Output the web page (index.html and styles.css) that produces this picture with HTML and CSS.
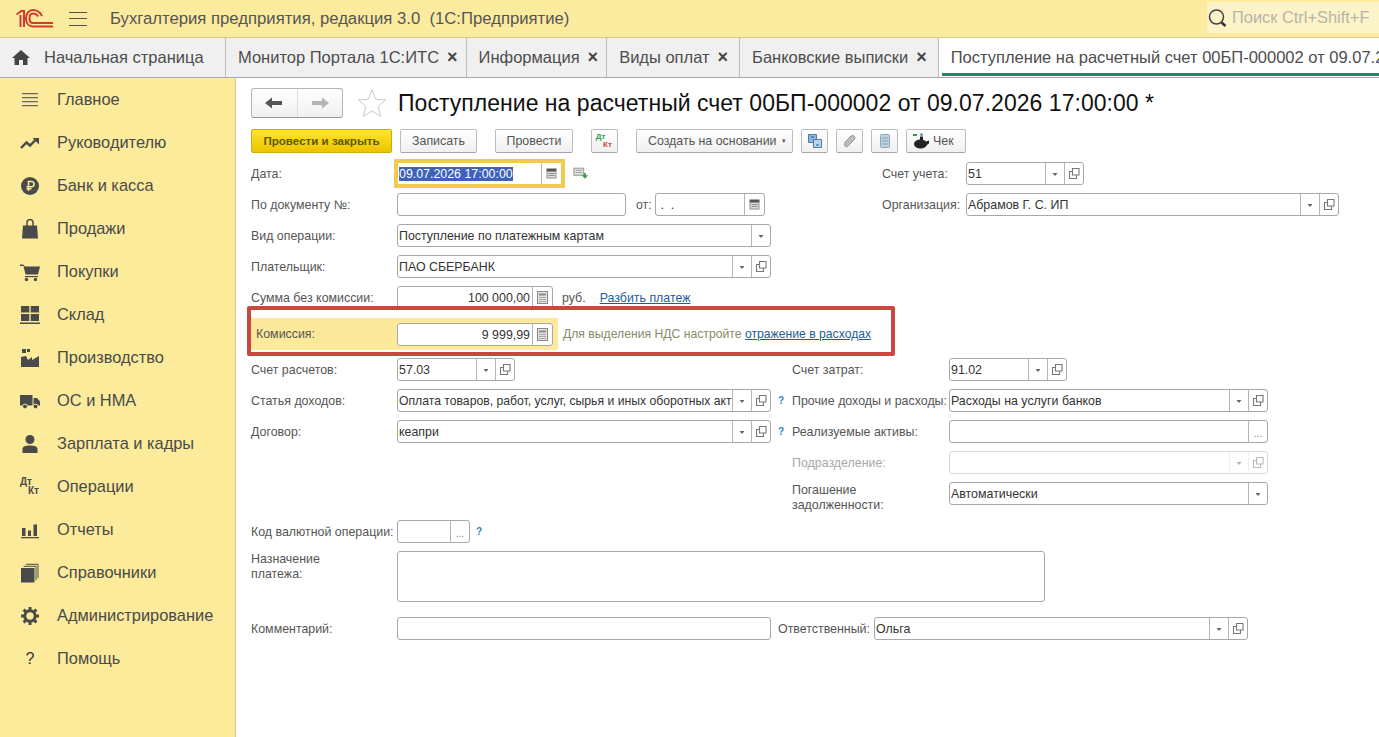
FILE: index.html
```html
<!DOCTYPE html>
<html lang="ru">
<head>
  <meta charset="UTF-8">
  <link rel="stylesheet" href="styles.css">
  <title>Поступление на расчетный счет</title>
</head>
<body>
  <svg class="sprites" width="0" height="0">
    <symbol id="i-select" viewBox="0 0 18 21"><path d="M6.500 10h5L9 13z" fill="#666"/></symbol>
    <symbol id="i-open" viewBox="0 0 18 21"><path d="M7.500 5.500h6.500v6.500H7.500z M7 8.500H4.500v7h7V12.500" fill="none" stroke="#777" stroke-width="1.100"/></symbol>
    <symbol id="i-cal" viewBox="0 0 19 21"><path d="M4.500 5.500h10v2.500h-10z" fill="#555"/><path d="M4.500 8h10v7.500h-10z" fill="#8e8e8e"/><path d="M5.500 9h8v5.500h-8z" fill="#dcdcdc"/><path d="M6.500 10.500h6M6.500 12.500h6" stroke="#8e8e8e"/></symbol>
    <symbol id="i-calc" viewBox="0 0 19 21"><rect x="4.500" y="4.500" width="10" height="12" fill="#e2e2e2" stroke="#888"/><path d="M6 6.500h7v2H6z" fill="#888"/><path d="M6 10.500h7M6 12.500h7M6 14.500h7" stroke="#aaa"/></symbol>
  </svg>

  <!-- Top bar -->
  <header class="topbar">
    <svg class="logo" width="38" height="19" viewBox="0 0 38 19">
      <g fill="none" stroke="#d23b2e" stroke-width="2">
        <path d="M0.500 5.500L5.500 2H8V18"/>
        <path d="M4.500 6V18"/>
        <path d="M26 7C24 3 20.500 1 17 1 12.500 1 10 5 10 9.500 10 14.500 13 17.500 17 17.500H37"/>
        <path d="M22 7.500C21 5.500 19 4.500 17 4.500 15 4.500 13.500 6.500 13.500 9.500 13.500 12.500 15 14 17 14H37"/>
      </g>
    </svg>
    <div class="burger"><span></span><span></span><span></span></div>
    <div class="app-title">Бухгалтерия предприятия, редакция 3.0&nbsp; (1С:Предприятие)</div>
    <div class="search">
      <svg width="22" height="22" viewBox="0 0 22 22"><circle cx="9.500" cy="10" r="7" fill="none" stroke="#444" stroke-width="1.500"/><path d="M14.500 15.500l4 3.500" stroke="#333" stroke-width="2.500"/></svg>
      <span>Поиск Ctrl+Shift+F</span>
    </div>
  </header>

  <!-- Tabs -->
  <nav class="tabs">
    <div class="tab tab-home">
      <svg width="18" height="15" viewBox="0 0 18 15"><path d="M9 0L0 8h2.500v7h4.500v-5h4v5h4.500V8H18z" fill="#444"/></svg>
      Начальная страница
    </div>
    <div class="tab">Монитор Портала 1С:ИТС <b class="close">×</b></div>
    <div class="tab">Информация <b class="close">×</b></div>
    <div class="tab tab-wide">Виды оплат <b class="close">×</b></div>
    <div class="tab tab-wide">Банковские выписки <b class="close">×</b></div>
    <div class="tab tab-active"><span>Поступление на расчетный счет 00БП-000002 от 09.07.2026 17:00:00 *</span></div>
  </nav>

  <div class="layout">
    <!-- Sidebar -->
    <aside class="sidebar">
      <div class="menu-item"><svg viewBox="0 0 20 20"><path d="M2 3h16v1.200H2zM2 7h16v1.200H2zM2 11h16v1.200H2zM2 15h16v1.200H2z" fill="#666"/></svg>Главное</div>
      <div class="menu-item"><svg viewBox="0 0 20 20"><path d="M1 15l5.500-5.500 3.500 3L16 6.500" fill="none" stroke="#4a4a4a" stroke-width="2.400"/><path d="M12.500 5H19v6.500z" fill="#4a4a4a"/></svg>Руководителю</div>
      <div class="menu-item"><svg viewBox="0 0 20 20"><circle cx="10" cy="10" r="9" fill="#4a4a4a"/><path d="M8.500 15V5.500h3a2.500 2.500 0 010 5.200h-5M6.500 12.800h5" fill="none" stroke="#fbeb9b" stroke-width="1.500"/></svg>Банк и касса</div>
      <div class="menu-item"><svg viewBox="0 0 20 20"><path d="M3 6.500h14l1 13H2z" fill="#4a4a4a"/><path d="M7 8.500V3.500a3 3 0 016 0V8.500" fill="none" stroke="#4a4a4a" stroke-width="1.500"/></svg>Продажи</div>
      <div class="menu-item"><svg viewBox="0 0 20 20"><path d="M0 2.500h3l2 2h15l-2 8H5.500L3.500 4H0z" fill="#4a4a4a"/><path d="M5 14h13v1.200H5z" fill="#4a4a4a"/><circle cx="6.500" cy="17.500" r="1.700" fill="#4a4a4a"/><circle cx="15.500" cy="17.500" r="1.700" fill="#4a4a4a"/></svg>Покупки</div>
      <div class="menu-item"><svg viewBox="0 0 20 20"><path d="M1 1h8.300v6.500H1zM10.700 1H19v6.500h-8.300zM1 9h8.300v7H1zM10.700 9H19v7h-8.300zM0 17.500h20V19H0z" fill="#4a4a4a"/></svg>Склад</div>
      <div class="menu-item"><svg viewBox="0 0 20 20"><path d="M1 19V9l5-1 2 4 4-3v3l7-4v11z" fill="#4a4a4a"/><path d="M2 1h4v4H2zM7 1h3v3H7z" fill="#4a4a4a"/></svg>Производство</div>
      <div class="menu-item"><svg viewBox="0 0 20 20"><path d="M0 4h12.500v10.500H0zM13.500 7H17l3 3.500v4h-6.500z" fill="#4a4a4a"/><circle cx="5" cy="15.500" r="2.400" fill="#4a4a4a" stroke="#fbeb9b"/><circle cx="15.500" cy="15.500" r="2.400" fill="#4a4a4a" stroke="#fbeb9b"/></svg>ОС и НМА</div>
      <div class="menu-item"><svg viewBox="0 0 20 20"><circle cx="10" cy="5.500" r="4.500" fill="#4a4a4a"/><path d="M2.500 19v-4c0-2.500 3-3.500 7.500-3.500s7.500 1 7.500 3.500v4z" fill="#4a4a4a"/></svg>Зарплата и кадры</div>
      <div class="menu-item"><span class="dtkt"><i>Дт</i><i>Кт</i></span>Операции</div>
      <div class="menu-item"><svg viewBox="0 0 20 20"><path d="M2 8h3.500v8H2zM8 10.500h3V16H8zM13.500 4.500H17V16h-3.500zM1 17h18v1.300H1z" fill="#4a4a4a"/></svg>Отчеты</div>
      <div class="menu-item"><svg viewBox="0 0 20 20"><path d="M1 5h13.500v14.500H1z" fill="#4a4a4a"/><path d="M3.500 3.300h12.500v14M6 1.300h12v14" fill="none" stroke="#4a4a4a" stroke-width="1"/></svg>Справочники</div>
      <div class="menu-item"><svg viewBox="0 0 20 20"><circle cx="10" cy="10" r="5.200" fill="none" stroke="#4a4a4a" stroke-width="3"/><path d="M10 1v3M10 16v3M1 10h3M16 10h3M3.600 3.600l2.200 2.200M14.200 14.200l2.200 2.200M3.600 16.400l2.200-2.200M14.200 5.800l2.200-2.200" stroke="#4a4a4a" stroke-width="3"/></svg>Администрирование</div>
      <div class="menu-item"><span class="help-mark">?</span>Помощь</div>
    </aside>

    <!-- Document -->
    <main class="doc">
      <div class="doc-head">
        <div class="nav-btns">
          <div class="nav-btn"><svg width="18" height="12" viewBox="0 0 18 12"><path d="M0 6l7-5.500v3.500h10v4H7v3.500z" fill="#555"/></svg></div>
          <div class="nav-btn"><svg width="18" height="12" viewBox="0 0 18 12"><path d="M18 6l-7-5.500v3.500H1v4h10v3.500z" fill="#b4b4b4"/></svg></div>
        </div>
        <svg class="star" width="30" height="30" viewBox="0 0 32 32"><path d="M16 2l4 10 10.500.8-8 7 2.600 10.500L16 24.500 6.900 30.300l2.600-10.500-8-7L12 12z" fill="#fff" stroke="#c4c4c4"/></svg>
        <h1>Поступление на расчетный счет 00БП-000002 от 09.07.2026 17:00:00 *</h1>
      </div>

      <div class="toolbar">
        <div class="btn btn-main">Провести и закрыть</div>
        <div class="btn btn-save">Записать</div>
        <div class="btn btn-post">Провести</div>
        <div class="btn btn-icon dtkt-btn"><span class="dt">Дт</span><span class="kt">Кт</span></div>
        <div class="btn btn-create">Создать на основании <em>▾</em></div>
        <div class="btn btn-icon"><svg width="16" height="16" viewBox="0 0 16 16"><path d="M1.500 1.500h8v8h-8z" fill="#8fb6d8" stroke="#4c7ea6"/><path d="M6.500 6.500h8v8h-8z" fill="#bcd4e8" stroke="#4c7ea6"/><path d="M4 4h3M9 12h3" stroke="#2f5f88"/></svg></div>
        <div class="btn btn-icon"><svg width="16" height="16" viewBox="0 0 16 16"><path d="M3 9l6-6a2.500 2.500 0 013.500 3.500L6 13a2 2 0 01-3-3z" fill="#bdbdbd" stroke="#999"/></svg></div>
        <div class="btn btn-icon"><svg width="16" height="16" viewBox="0 0 16 16"><rect x="3.500" y="1.500" width="9" height="13" rx="1" fill="#bdd3e6" stroke="#8aa"/><path d="M5 5h6M5 8h6M5 11h6" stroke="#8a9fb0"/></svg></div>
        <div class="btn btn-check"><svg width="18" height="16" viewBox="0 0 18 16"><ellipse cx="8.500" cy="11" rx="6.500" ry="4.500" fill="#222"/><path d="M14 8.500l3-1v3l-3 2z" fill="#222"/><path d="M1 1h4v2H1z" fill="#2f9e4f"/><path d="M9.500 0l2 2.500h-4z" fill="#2f6fa8"/><path d="M8 3.500h3V7H8z" fill="#222"/></svg>Чек</div>
      </div>

      <div class="form">
        <!-- Верхний блок -->
        <section class="block block-top">
          <div class="col">
            <div class="row">
              <label>Дата:</label>
              <div class="field w-date focus"><span class="val"><mark>09.07.2026 17:00:00</mark></span><span class="fb fb-cal"><svg><use href="#i-cal"/></svg></span></div>
              <svg class="post-ico" width="16" height="13" viewBox="0 0 18 14"><path d="M1 1h11v8H1z" fill="#dfe6e2" stroke="#888"/><path d="M3 3.500h7M3 6h7" stroke="#999"/><path d="M10 9h2.500V6.500h2V9H17l-3.500 4z" fill="#2f9e4f"/></svg>
            </div>
            <div class="row">
              <label>По документу №:</label>
              <div class="field w-num"></div>
              <span class="ot">от:</span>
              <div class="field w-from"><span class="val">&nbsp;. &nbsp;.</span><span class="fb fb-cal"><svg><use href="#i-cal"/></svg></span></div>
            </div>
            <div class="row">
              <label>Вид операции:</label>
              <div class="field w-op"><span class="val">Поступление по платежным картам</span><span class="fb"><svg><use href="#i-select"/></svg></span></div>
            </div>
            <div class="row">
              <label>Плательщик:</label>
              <div class="field w-op"><span class="val">ПАО СБЕРБАНК</span><span class="fb"><svg><use href="#i-select"/></svg></span><span class="fb"><svg><use href="#i-open"/></svg></span></div>
            </div>
            <div class="row">
              <label>Сумма без комиссии:</label>
              <div class="field w-sum"><span class="val num">100 000,00</span><span class="fb fb-cal"><svg><use href="#i-calc"/></svg></span></div>
              <span class="unit">руб.</span>
              <a class="link split">Разбить платеж</a>
            </div>
          </div>
          <div class="col col-top-right">
            <div class="row">
              <label class="l-top">Счет учета:</label>
              <div class="field w-acc"><span class="val">51</span><span class="fb"><svg><use href="#i-select"/></svg></span><span class="fb"><svg><use href="#i-open"/></svg></span></div>
            </div>
            <div class="row">
              <label class="l-top">Организация:</label>
              <div class="field w-org"><span class="val">Абрамов Г. С. ИП</span><span class="fb"><svg><use href="#i-select"/></svg></span><span class="fb"><svg><use href="#i-open"/></svg></span></div>
            </div>
          </div>
        </section>

        <!-- Комиссия -->
        <section class="fee-row">
          <div class="fee-hl">
            <label>Комиссия:</label>
            <div class="field w-sum"><span class="val num">9 999,99</span><span class="fb fb-cal"><svg><use href="#i-calc"/></svg></span></div>
          </div>
          <span class="fee-note">Для выделения НДС настройте <a class="link">отражение в расходах</a></span>
          <div class="red-frame"></div>
        </section>

        <!-- Средний блок -->
        <section class="block block-mid">
          <div class="col col-mid-left">
            <div class="row">
              <label>Счет расчетов:</label>
              <div class="field w-acc2"><span class="val">57.03</span><span class="fb"><svg><use href="#i-select"/></svg></span><span class="fb"><svg><use href="#i-open"/></svg></span></div>
            </div>
            <div class="row">
              <label>Статья доходов:</label>
              <div class="field w-item"><span class="val val-long">Оплата товаров, работ, услуг, сырья и иных оборотных акт</span><span class="fb"><svg><use href="#i-select"/></svg></span><span class="fb"><svg><use href="#i-open"/></svg></span></div>
              <span class="q">?</span>
            </div>
            <div class="row">
              <label>Договор:</label>
              <div class="field w-item"><span class="val">кеапри</span><span class="fb"><svg><use href="#i-select"/></svg></span><span class="fb"><svg><use href="#i-open"/></svg></span></div>
              <span class="q">?</span>
            </div>
          </div>
          <div class="col">
            <div class="row">
              <label class="l-mid">Счет затрат:</label>
              <div class="field w-acc2"><span class="val">91.02</span><span class="fb"><svg><use href="#i-select"/></svg></span><span class="fb"><svg><use href="#i-open"/></svg></span></div>
            </div>
            <div class="row">
              <label class="l-mid">Прочие доходы и расходы:</label>
              <div class="field w-other"><span class="val">Расходы на услуги банков</span><span class="fb"><svg><use href="#i-select"/></svg></span><span class="fb"><svg><use href="#i-open"/></svg></span></div>
            </div>
            <div class="row">
              <label class="l-mid">Реализуемые активы:</label>
              <div class="field w-other"><span class="val"></span><span class="fb fb-dots">...</span></div>
            </div>
            <div class="row disabled">
              <label class="l-mid">Подразделение:</label>
              <div class="field w-other"><span class="val"></span><span class="fb"><svg><use href="#i-select"/></svg></span><span class="fb"><svg><use href="#i-open"/></svg></span></div>
            </div>
            <div class="row">
              <label class="l-mid l-wrap">Погашение задолженности:</label>
              <div class="field w-other"><span class="val">Автоматически</span><span class="fb"><svg><use href="#i-select"/></svg></span></div>
            </div>
          </div>
        </section>

        <!-- Нижний блок -->
        <section class="block-bottom">
          <div class="row">
            <label>Код валютной операции:</label>
            <div class="field w-code"><span class="val"></span><span class="fb fb-dots">...</span></div>
            <span class="q q-code">?</span>
          </div>
          <div class="row row-purpose">
            <label class="l-purpose">Назначение платежа:</label>
            <div class="field w-purpose"></div>
          </div>
          <div class="row row-comment">
            <label>Комментарий:</label>
            <div class="field w-comment"></div>
            <label class="l-resp">Ответственный:</label>
            <div class="field w-resp"><span class="val">Ольга</span><span class="fb"><svg><use href="#i-select"/></svg></span><span class="fb"><svg><use href="#i-open"/></svg></span></div>
          </div>
        </section>
      </div>
    </main>
  </div>
</body>
</html>
```

FILE: styles.css
```css
/* General */
html, body {
  margin: 0;
  height: 737px;
  overflow: hidden;
}

body {
  font-family: "Liberation Sans", Arial, sans-serif;
  font-size: 12.4px;
  color: #4a4a4a;
  background: #fff;
}

.sprites {
  position: absolute;
}

/* Top bar */
.topbar {
  height: 37px;
  display: flex;
  align-items: center;
  background: #fbeb9f;
  border-bottom: 1px solid #d9c987;
}

.logo {
  margin-left: 16px;
}

.burger {
  width: 18px;
  margin-left: 15px;
  display: flex;
  flex-direction: column;
  gap: 5.5px;
}

.burger span {
  height: 1px;
  background: #555;
}

.app-title {
  margin-left: 23px;
  font-size: 16.7px;
  color: #555;
}

.search {
  margin-left: auto;
  margin-bottom: 2px;
  width: 172px;
  height: 31px;
  display: flex;
  align-items: center;
  gap: 3px;
  background: #fdf3c9;
  font-size: 16.4px;
  color: #b5b5a8;
}

/* Tabs */
.tabs {
  height: 39px;
  display: flex;
  background: #f0f0f0;
  border-bottom: 1px solid #a8a8a8;
  overflow: hidden;
}

.tab {
  display: flex;
  align-items: center;
  padding: 0 8px 0 12px;
  font-size: 16.5px;
  color: #4d4d4d;
  border-right: 1px solid #bdbdbd;
  white-space: nowrap;
}

.tab-wide {
  padding-right: 11px;
}

.tab-home {
  gap: 14px;
  width: 226px;
  box-sizing: border-box;
}

.close {
  margin-left: 8px;
  font-size: 18px;
  font-weight: bold;
  color: #444;
}

.tab-active {
  flex: 1;
  min-width: 0;
  padding: 0 0 0 3px;
  background: #fff;
  border-right: 0;
}

.tab-active span {
  flex: 1;
  min-width: 0;
  padding-left: 9px;
  height: 35px;
  line-height: 38px;
  margin-bottom: 1px;
  border-bottom: 3px solid #1d8a62;
  overflow: hidden;
}

/* Layout */
.layout {
  display: flex;
  height: 659px;
}

/* Sidebar */
.sidebar {
  width: 236px;
  flex: none;
  box-sizing: border-box;
  background: #fbeb9b;
  border-right: 1px solid #d9cc8f;
}

.menu-item {
  height: 43px;
  display: flex;
  align-items: center;
  padding-left: 20px;
  font-size: 16.4px;
  color: #4a4a4a;
}

.menu-item svg,
.dtkt,
.help-mark {
  width: 20px;
  height: 20px;
  flex: none;
  margin-right: 17px;
}

.dtkt {
  display: flex;
  flex-direction: column;
  font-size: 10px;
  font-weight: bold;
  line-height: 9px;
  color: #4a4a4a;
}

.dtkt i {
  font-style: normal;
}

.dtkt i + i {
  margin-left: 8px;
}

.help-mark {
  font-size: 16px;
  text-align: center;
  color: #333;
  line-height: 20px;
}

/* Document */
.doc {
  flex: 1;
  padding-left: 15px;
  min-width: 0;
}

.doc-head {
  height: 50px;
  display: flex;
  align-items: center;
}

.nav-btns {
  width: 92px;
  height: 30px;
  display: flex;
  box-sizing: border-box;
  border: 1px solid #b5b5b5;
  border-bottom-color: #999;
  border-radius: 3px;
  background: linear-gradient(#fff, #f0f0f0);
}

.nav-btn {
  flex: 1;
  display: flex;
  align-items: center;
  justify-content: center;
}

.nav-btn + .nav-btn {
  border-left: 1px solid #dcdcdc;
}

.star {
  margin-left: 14px;
}

.doc-head h1 {
  margin: 0 0 0 11px;
  font-size: 23px;
  letter-spacing: 0.03px;
  font-weight: normal;
  color: #111;
  white-space: nowrap;
}

/* Toolbar */
.toolbar {
  display: flex;
  height: 25px;
  margin-top: 1px;
}

.btn {
  height: 24px;
  box-sizing: border-box;
  display: flex;
  align-items: center;
  justify-content: center;
  flex: none;
  border: 1px solid #bdbdbd;
  border-bottom-color: #a5a5a5;
  border-radius: 2px;
  background: linear-gradient(#fff, #f0f0f0);
  color: #555;
}

.btn-main {
  width: 141px;
  padding-bottom: 2px;
  border-color: #c9ad10;
  background: linear-gradient(#fde62a, #ecc400);
  font-size: 11.6px;
  font-weight: bold;
  color: #5f5700;
}

.btn-save {
  width: 77px;
  margin-left: 8px;
}

.btn-post {
  width: 78px;
  margin-left: 18px;
}

.btn-icon {
  width: 27px;
}

.dtkt-btn {
  margin-left: 18px;
  flex-direction: column;
  font-size: 8px;
  font-weight: bold;
  line-height: 8px;
}

.dt {
  color: #2f9e4f;
  margin-right: 8px;
}

.kt {
  color: #d4453a;
  margin-left: 6px;
}

.btn-create {
  width: 157px;
  margin-left: 18px;
  margin-right: 8px;
  padding-left: 11px;
  justify-content: flex-start;
}

.btn-create em {
  font-style: normal;
  font-size: 7px;
  margin-left: 5px;
}

.btn-icon + .btn-icon {
  margin-left: 8px;
}

.btn-check {
  width: 60px;
  margin-left: 8px;
  padding-left: 5px;
  justify-content: flex-start;
  gap: 3px;
}

/* Form */
.form {
  padding-top: 4px;
}

.row {
  height: 31px;
  display: flex;
  align-items: center;
}

.row label {
  width: 146px;
  flex: none;
  box-sizing: border-box;
  color: #555;
}

.field {
  height: 23px;
  box-sizing: border-box;
  flex: none;
  display: flex;
  background: #fff;
  border: 1px solid #a8a8a8;
  border-radius: 3px;
}

.val {
  flex: 1;
  min-width: 0;
  padding-left: 1px;
  line-height: 22px;
  color: #333;
  white-space: nowrap;
  overflow: hidden;
}

.val.num {
  text-align: right;
  padding-right: 2px;
}

.val-long {
  font-size: 12.2px;
}

.fb {
  width: 18px;
  flex: none;
  border-left: 1px solid #b5b5b5;
}

.fb svg {
  display: block;
  width: 18px;
  height: 21px;
}

.fb-cal {
  width: 19px;
}

.fb-cal svg {
  width: 19px;
}

.fb-dots {
  text-align: center;
  line-height: 26px;
  color: #888;
  font-size: 10px;
}

.block {
  display: flex;
}

.col {
  flex: none;
}

/* Верхний блок */
.block-top .col:first-child {
  width: 631px;
}

.col-top-right label {
  width: 84px;
}

.w-date {
  width: 165px;
}

.focus {
  outline: 3px solid #f2ca50;
  border-color: #f2ca50;
  border-radius: 0;
}

mark {
  background: #3d62b8;
  color: #fff;
}

.post-ico {
  margin-left: 11px;
}

.w-num {
  width: 229px;
}

.ot {
  margin-left: 10px;
  width: 19px;
  color: #555;
}

.w-from {
  width: 110px;
}

.w-op {
  width: 374px;
}

.w-sum {
  width: 156px;
}

.unit {
  margin-left: 9px;
  color: #555;
}

.link {
  color: #1f5c99;
  text-decoration: underline;
}

.split {
  margin-left: 14px;
}

.w-acc {
  width: 118px;
}

.w-org {
  width: 373px;
}

/* Комиссия */
.fee-row {
  position: relative;
  height: 32px;
  margin-top: 5px;
  display: flex;
  align-items: center;
}

.fee-hl {
  width: 311px;
  height: 32px;
  margin-left: -4px;
  padding-left: 9px;
  box-sizing: border-box;
  display: flex;
  align-items: center;
  background: #fde99b;
}

.fee-hl label {
  width: 141px;
  flex: none;
  color: #555;
}

.fee-note {
  margin-left: 5px;
  font-size: 12.2px;
  color: #8a8a6a;
}

.red-frame {
  position: absolute;
  left: -4px;
  top: -12px;
  box-sizing: border-box;
  width: 648px;
  height: 50px;
  border: 4px solid #c9483e;
  border-radius: 2px;
}

/* Средний блок */
.block-mid {
  margin-top: 4px;
}

.col-mid-left {
  width: 541px;
}

.w-acc2 {
  width: 118px;
}

.w-item {
  width: 374px;
}

.q {
  margin-left: 7px;
  font-size: 10px;
  font-weight: bold;
  color: #2a86b8;
}

.row .l-mid {
  width: 157px;
}

.w-other {
  width: 319px;
}

.disabled label {
  color: #a8a8a8;
}

.disabled .field {
  border-color: #d8d8d8;
}

.disabled .fb {
  border-color: #dedede;
  opacity: 0.5;
}

.row .l-wrap {
  padding: 8px 40px 0 0;
  line-height: 15px;
}

/* Нижний блок */
.block-bottom {
  margin-top: 7px;
}

.w-code {
  width: 73px;
}

.q-code {
  margin-left: 6px;
}

.row-purpose {
  height: 51px;
  margin-top: 4px;
  align-items: flex-start;
}

.row .l-purpose {
  padding: 1px 40px 0 0;
  line-height: 15px;
}

.w-purpose {
  width: 648px;
  height: 51px;
}

.row-comment {
  margin-top: 11px;
}

.w-comment {
  width: 374px;
}

.row .l-resp {
  width: 96px;
  margin-left: 7px;
  white-space: nowrap;
}

.w-resp {
  width: 374px;
}
```
